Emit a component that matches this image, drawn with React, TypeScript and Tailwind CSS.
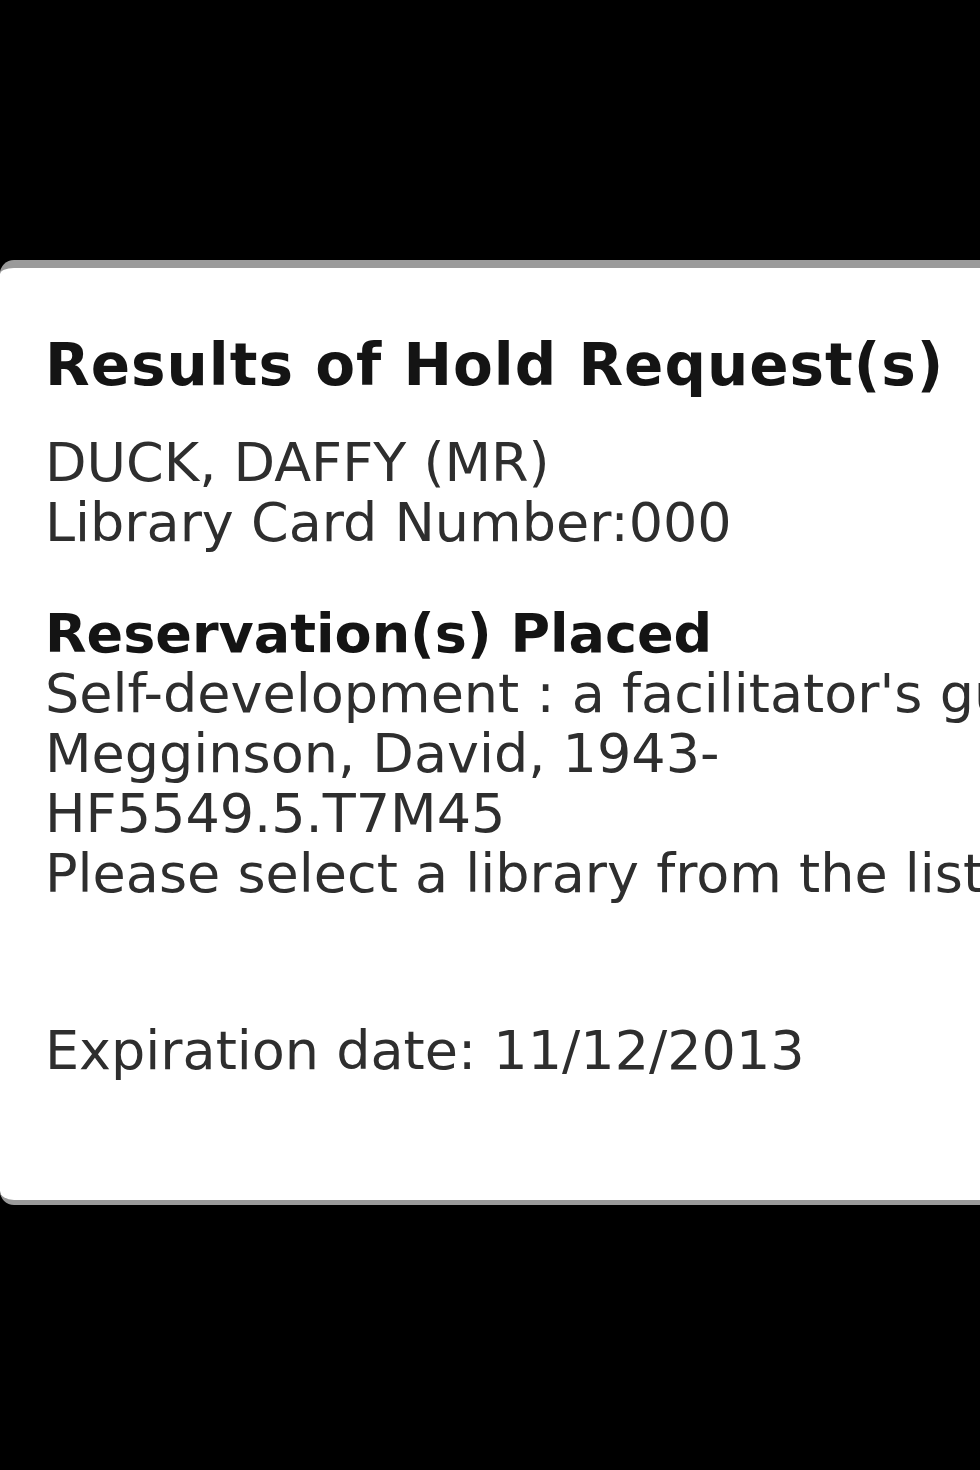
export default function App() {
  return (
    <div className="w-[980px] h-[1470px] bg-black overflow-hidden pt-[260px]">
      <div
        className="h-[945px] bg-white border-t-[8px] border-b-[5px] border-[#9a9a9a] rounded-l-[14px] overflow-hidden whitespace-nowrap text-[#2e2e2e] pl-[45px]"
        style={{ fontFamily: '"DejaVu Sans", Verdana, sans-serif' }}
      >
        <h1 className="mt-[62px] text-[58px] leading-[70px] tracking-[1px] font-bold text-[#141414]">
          Results of Hold Request(s)
        </h1>
        <div className="mt-[33px] text-[54px] leading-[60px]">
          <div>DUCK, DAFFY (MR)</div>
          <div>Library Card Number:000</div>
        </div>
        <div className="mt-[51px] text-[54px] leading-[60px]">
          <div className="font-bold text-[#141414]">Reservation(s) Placed</div>
          <div>Self-development : a facilitator's guide</div>
          <div>Megginson, David, 1943-</div>
          <div>HF5549.5.T7M45</div>
          <div>Please select a library from the list of locations</div>
        </div>
        <div className="mt-[117px] text-[54px] leading-[60px]">
          Expiration date: 11/12/2013
        </div>
      </div>
    </div>
  );
}
